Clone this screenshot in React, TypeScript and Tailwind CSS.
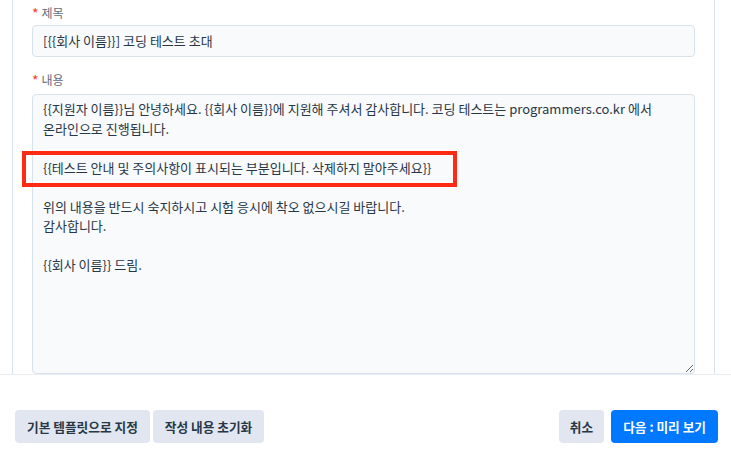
export default function App() {
  const lines = [
    "{{지원자 이름}}님 안녕하세요. {{회사 이름}}에 지원해 주셔서 감사합니다. 코딩 테스트는 programmers.co.kr 에서",
    "온라인으로 진행됩니다.",
    "",
    "{{테스트 안내 및 주의사항이 표시되는 부분입니다. 삭제하지 말아주세요}}",
    "",
    "위의 내용을 반드시 숙지하시고 시험 응시에 착오 없으시길 바랍니다.",
    "감사합니다.",
    "",
    "{{회사 이름}} 드림.",
  ];

  return (
    <div
      className="relative w-[731px] h-[459px] overflow-hidden bg-white text-[#44505f]"
      style={{ fontFamily: '"Noto Sans CJK KR", "Noto Sans", sans-serif' }}
    >
      {/* modal body */}
      <div className="h-[375px] border-b border-[#e9edf3]">
        <div className="ml-[12px] w-[703px] h-full border-x border-[#d7e2eb] pl-[19px] pr-[19px] overflow-hidden">
          <div className="flex items-center gap-[3px] pt-[5px] h-[20px] text-[12px] text-[#5f6b7a]">
            <span className="text-[#ff3b30] text-[14px] leading-none">*</span>
            <span>제목</span>
          </div>
          <div className="mt-[5px] h-[32px] rounded-[4px] border border-[#d7e2eb] bg-[#f9fafc] px-[10px] flex items-center text-[13px] text-[#263747]">
            [{"{{"}회사 이름{"}}"}] 코딩 테스트 초대
          </div>
          <div className="flex items-center gap-[3px] mt-[13px] h-[20px] text-[12px] text-[#5f6b7a]">
            <span className="text-[#ff3b30] text-[14px] leading-none">*</span>
            <span>내용</span>
          </div>
          <div className="mt-[4px] h-[280px] resize overflow-hidden rounded-[4px] border border-[#d7e2eb] bg-[#f9fafc] px-[10px] pt-[4px] text-[13px] leading-[19.5px] text-[#263747]">
            {lines.map((l, i) => (
              <div key={i} className="h-[19.5px] whitespace-pre">
                {l}
              </div>
            ))}
          </div>
        </div>
      </div>

      {/* annotation box */}
      <div className="absolute left-[22px] top-[151px] w-[435px] h-[36px] border-4 border-[#ff2a14]" />

      {/* footer */}
      <div className="flex items-center justify-between pl-[15px] pt-[35px] pr-[13px]">
        <div className="flex gap-[3px]">
          <button className="h-[33px] rounded-[4px] bg-[#e2e6f0] px-[12px] text-[12.7px] font-bold text-[#263747]">
            기본 템플릿으로 지정
          </button>
          <button className="h-[33px] rounded-[4px] bg-[#e2e6f0] px-[12px] text-[12.7px] font-bold text-[#263747]">
            작성 내용 초기화
          </button>
        </div>
        <div className="flex gap-[7px]">
          <button className="h-[33px] rounded-[4px] bg-[#e2e6f0] px-[11px] text-[12.7px] font-bold text-[#263747]">
            취소
          </button>
          <button className="h-[33px] rounded-[4px] bg-[#0078ff] px-[12px] text-[12.7px] font-bold text-white">
            다음 : 미리 보기
          </button>
        </div>
      </div>
    </div>
  );
}
